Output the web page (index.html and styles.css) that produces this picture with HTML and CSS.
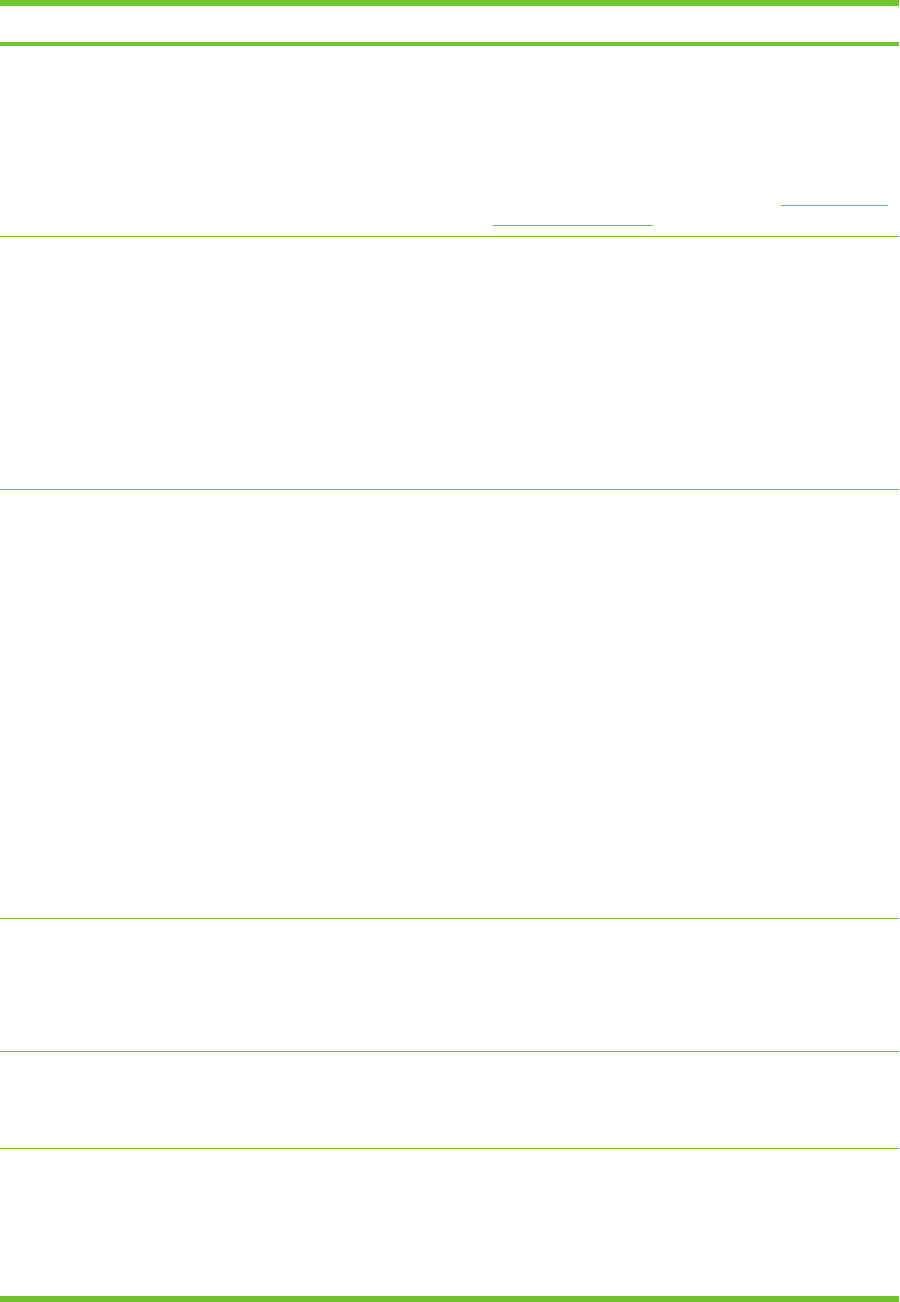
FILE: index.html
```html
<!DOCTYPE html>
<html lang="en">
<head>
<meta charset="utf-8">
<title>Table</title>
<link rel="stylesheet" href="styles.css">
</head>
<body>
<div class="page">
  <div class="table">
    <div class="head"></div>
    <div class="row row-1">
      <div class="cell cell-label"></div>
      <div class="cell cell-text">
        <a class="link link-a" href="#"></a>
        <a class="link link-b" href="#"></a>
      </div>
    </div>
    <div class="row row-2"></div>
    <div class="row row-3"></div>
    <div class="row row-4"></div>
    <div class="row row-5"></div>
    <div class="row row-6 last"></div>
  </div>
</div>
</body>
</html>
```

FILE: styles.css
```css
html, body {
  margin: 0;
  padding: 0;
  background: #ffffff;
  font-family: "Liberation Sans", Arial, sans-serif;
}

.page {
  width: 899px;
}

.table {
  display: flex;
  flex-direction: column;
  border-top: 6px solid #70c42f;
  border-bottom: 6px solid #70c42f;
}

.head {
  height: 36px;
  border-bottom: 4px solid #70c42f;
}

.row {
  display: grid;
  grid-template-columns: 493px 1fr;
  border-bottom: 1px solid #70c42f;
}

.row.last {
  border-bottom: none;
}

.row-1 { height: 190px; }
.row-2 { height: 252px; }
.row-3 { height: 428px; }
.row-4 { height: 132px; }
.row-5 { height: 96px; }
.row-6 { height: 147px; }

.cell-text {
  display: flex;
  flex-direction: column;
  padding-top: 159px;
}

.link {
  display: block;
  height: 0;
  border-top: 1px solid #70c42f;
}

.link-a {
  margin-left: 288px;
  width: 107px;
}

.link-b {
  margin-top: 19px;
  width: 160px;
}
```
